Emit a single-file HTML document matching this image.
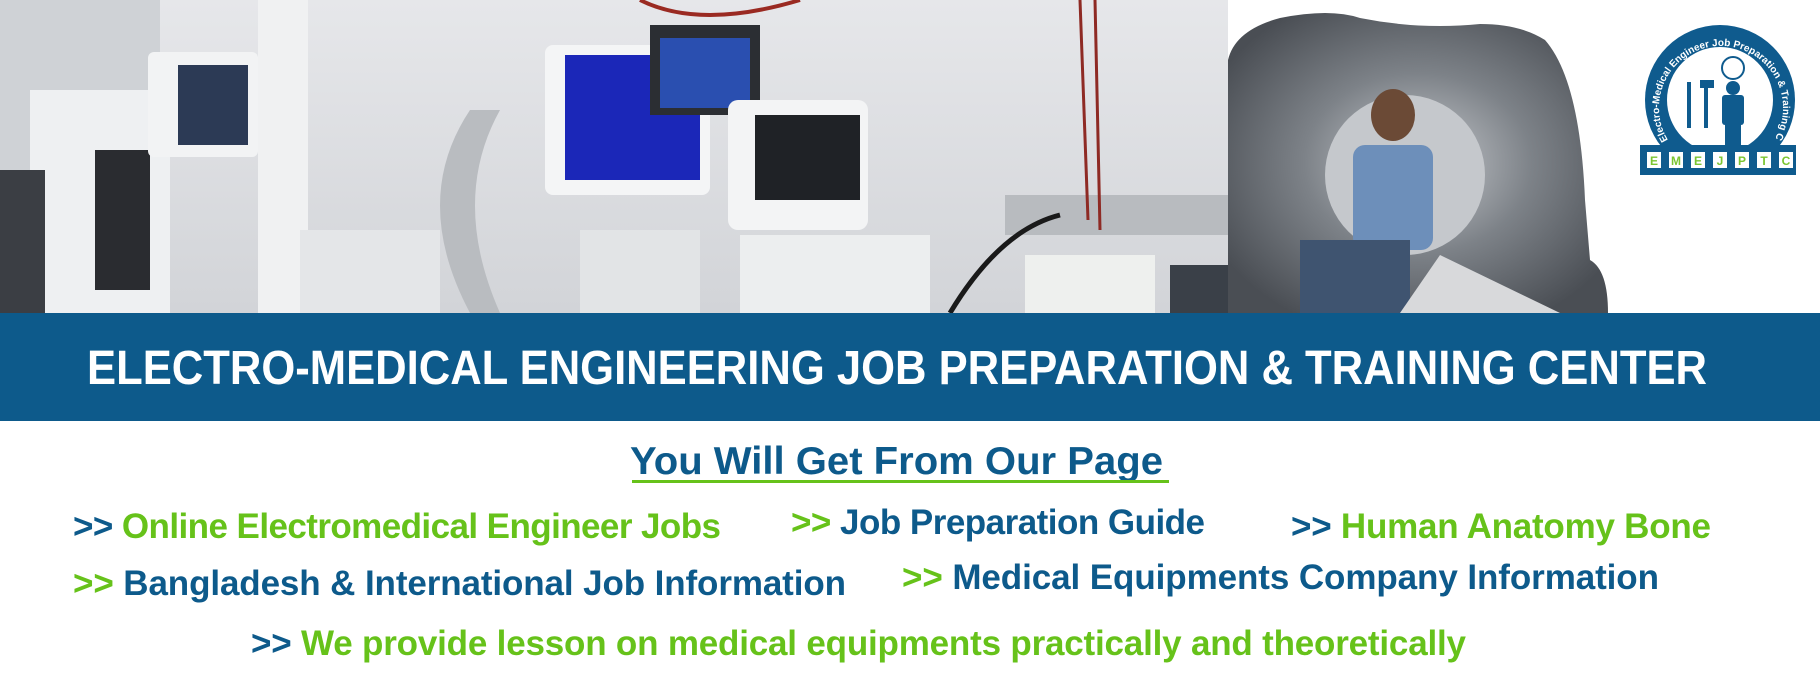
<!DOCTYPE html>
<html><head><meta charset="utf-8"><style>
html,body{margin:0;padding:0;background:#fff;}
body{width:1820px;height:692px;overflow:hidden;position:relative;font-family:"Liberation Sans",sans-serif;}
</style></head><body>
<svg width="1820" height="692" viewBox="0 0 1820 692" xmlns="http://www.w3.org/2000/svg" style="position:absolute;left:0;top:0">
<defs>
<linearGradient id="wall" x1="0" y1="0" x2="0" y2="1"><stop offset="0" stop-color="#e6e7ea"/><stop offset="1" stop-color="#d2d4d8"/></linearGradient>
<radialGradient id="ct" cx="0.5" cy="0.5" r="0.6"><stop offset="0" stop-color="#c9ccd0"/><stop offset="0.5" stop-color="#7d8288"/><stop offset="1" stop-color="#4a4e54"/></radialGradient>
</defs>
<rect x="0" y="0" width="1228" height="313" fill="url(#wall)"/>
<rect x="0" y="0" width="160" height="313" fill="#cfd2d6"/>
<rect x="30" y="90" width="140" height="223" fill="#eef0f2"/>
<rect x="95" y="150" width="55" height="140" fill="#2a2c30"/>
<rect x="0" y="170" width="45" height="143" fill="#3b3e44"/>
<rect x="148" y="52" width="110" height="105" rx="6" fill="#f2f3f4"/>
<rect x="178" y="65" width="70" height="80" fill="#2c3a55"/>
<rect x="258" y="0" width="50" height="313" fill="#f0f1f2"/>
<rect x="300" y="230" width="140" height="83" fill="#e4e6e8"/>
<path d="M470 313 Q410 200 470 110 L500 110 Q450 200 500 313Z" fill="#b9bcc0"/>
<rect x="545" y="45" width="165" height="150" rx="8" fill="#f4f5f6"/>
<rect x="565" y="55" width="135" height="125" fill="#1b27b8"/>
<rect x="650" y="25" width="110" height="90" fill="#2b2e33"/>
<rect x="660" y="38" width="90" height="70" fill="#2a4fb0"/>
<rect x="728" y="100" width="140" height="130" rx="10" fill="#f3f4f5"/>
<rect x="755" y="115" width="105" height="85" fill="#1f2226"/>
<rect x="740" y="235" width="190" height="78" fill="#eceeef"/>
<rect x="580" y="230" width="120" height="83" fill="#e2e4e6"/>
<rect x="1005" y="195" width="223" height="40" fill="#b8bbbf"/>
<rect x="1025" y="255" width="130" height="58" fill="#eef0ee"/>
<rect x="1170" y="265" width="58" height="48" fill="#3a4048"/>
<path d="M1080 0 L1088 220 M1095 0 L1100 230" stroke="#8e2a24" stroke-width="3" fill="none"/>
<path d="M950 313 Q1000 230 1060 215" stroke="#1a1a1a" stroke-width="5" fill="none"/>
<path d="M640 0 Q700 30 800 0" stroke="#9a2a22" stroke-width="4" fill="none"/>
<rect x="1228" y="0" width="400" height="313" fill="#fff"/>
<path d="M1228 313 L1228 60 Q1235 30 1280 18 Q1330 8 1360 18 Q1420 30 1480 24 Q1520 24 1545 40 Q1580 80 1585 200 L1590 260 Q1608 270 1608 313 Z" fill="url(#ct)"/>
<ellipse cx="1405" cy="175" rx="80" ry="80" fill="#c5c8cc"/>
<rect x="1353" y="145" width="80" height="105" rx="12" fill="#6d8fba"/>
<ellipse cx="1393" cy="115" rx="22" ry="26" fill="#6b4a36"/>
<rect x="1300" y="240" width="110" height="73" fill="#3f5470"/>
<path d="M1400 313 L1440 255 L1560 313Z" fill="#d8d9db"/>
<circle cx="1720" cy="100" r="75" fill="#0f5b8e"/>
<circle cx="1720" cy="100" r="53" fill="#fff"/>
<rect x="1640" y="145" width="156" height="30" fill="#0f5b8e"/>
<g font-family="Liberation Sans,sans-serif" font-size="12" font-weight="bold" fill="#7bc531" text-anchor="middle">
<rect x="1647" y="152" width="14" height="16" fill="#fff"/><text x="1654" y="165">E</text>
<rect x="1669" y="152" width="14" height="16" fill="#fff"/><text x="1676" y="165">M</text>
<rect x="1691" y="152" width="14" height="16" fill="#fff"/><text x="1698" y="165">E</text>
<rect x="1713" y="152" width="14" height="16" fill="#fff"/><text x="1720" y="165">J</text>
<rect x="1735" y="152" width="14" height="16" fill="#fff"/><text x="1742" y="165">P</text>
<rect x="1757" y="152" width="14" height="16" fill="#fff"/><text x="1764" y="165">T</text>
<rect x="1779" y="152" width="14" height="16" fill="#fff"/><text x="1786" y="165">C</text>
</g>
<path id="arc" d="M1668 140 A62 62 0 1 1 1774 140" fill="none"/>
<text font-family="Liberation Sans,sans-serif" font-size="10" font-weight="bold" fill="#fff"><textPath href="#arc">Electro-Medical Engineer Job Preparation &amp; Training Center</textPath></text>
<circle cx="1733" cy="68" r="11" fill="none" stroke="#0f5b8e" stroke-width="2"/>
<circle cx="1733" cy="88" r="7" fill="#0f5b8e"/>
<rect x="1722" y="95" width="22" height="30" rx="3" fill="#0f5b8e"/>
<rect x="1725" y="120" width="16" height="25" fill="#0f5b8e"/>
<path d="M1689 82 L1689 128 M1706 82 L1706 128" stroke="#0f5b8e" stroke-width="4"/>
<rect x="1700" y="80" width="14" height="8" fill="#0f5b8e"/>
<rect x="0" y="313" width="1820" height="108" fill="#0d5a8b"/>
<text x="87" y="384" textLength="1620" lengthAdjust="spacingAndGlyphs" font-family="Liberation Sans,sans-serif" font-weight="bold" font-size="48" fill="#fff">ELECTRO-MEDICAL ENGINEERING JOB PREPARATION &amp; TRAINING CENTER</text>
<text x="630" y="474" textLength="533" lengthAdjust="spacingAndGlyphs" font-family="Liberation Sans,sans-serif" font-weight="bold" font-size="39" fill="#0d5a8b">You Will Get From Our Page</text>
<rect x="632" y="480" width="537" height="3" fill="#66c21a"/>
<g font-family="Liberation Sans,sans-serif" font-weight="bold" font-size="35" lengthAdjust="spacingAndGlyphs">
<text x="73" y="538" textLength="648"><tspan fill="#0d5a8b">&gt;&gt; </tspan><tspan fill="#66c21a">Online Electromedical Engineer Jobs</tspan></text>
<text x="791" y="534" textLength="414"><tspan fill="#66c21a">&gt;&gt; </tspan><tspan fill="#0d5a8b">Job Preparation Guide</tspan></text>
<text x="1291" y="538" textLength="420"><tspan fill="#0d5a8b">&gt;&gt; </tspan><tspan fill="#66c21a">Human Anatomy Bone</tspan></text>
<text x="73" y="595" textLength="773"><tspan fill="#66c21a">&gt;&gt; </tspan><tspan fill="#0d5a8b">Bangladesh &amp; International Job Information</tspan></text>
<text x="902" y="589" textLength="757"><tspan fill="#66c21a">&gt;&gt; </tspan><tspan fill="#0d5a8b">Medical Equipments Company Information</tspan></text>
<text x="251" y="655" textLength="1215"><tspan fill="#0d5a8b">&gt;&gt; </tspan><tspan fill="#66c21a">We provide lesson on medical equipments practically and theoretically</tspan></text>
</g>
</svg>
</body></html>
